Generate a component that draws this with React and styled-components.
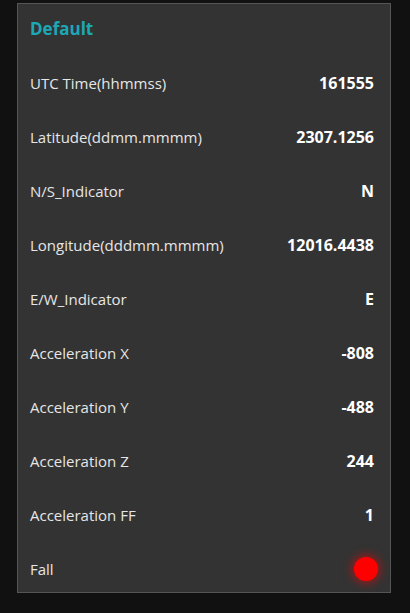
import React from 'react';
import styled, { createGlobalStyle } from 'styled-components';

const GlobalStyle = createGlobalStyle`
    html, body {
        margin: 0;
        padding: 0;
        background-color: #111111;
    }
    body {
        font-family: "Open Sans", "Noto Sans", sans-serif;
    }
`;

const Page = styled.div`
    width: 410px;
    height: 613px;
    padding: 3px 0 0 17px;
    box-sizing: border-box;
`;

const Panel = styled.section`
    width: 374px;
    height: 590px;
    box-sizing: border-box;
    background-color: #333333;
    border: 1px solid #555555;
    display: flex;
    flex-direction: column;
`;

const Title = styled.h2`
    margin: 0;
    padding: 13px 12px 0 12px;
    height: 48px;
    box-sizing: border-box;
    line-height: 24px;
    font-size: 17px;
    font-weight: 700;
    color: #1ca9b5;
`;

const List = styled.div`
    display: flex;
    flex-direction: column;
    gap: 8px;
    margin-top: 8px;
`;

const Row = styled.div`
    height: 46px;
    display: flex;
    align-items: center;
    justify-content: space-between;
    padding: 0 16px 0 12px;
`;

const Label = styled.span`
    font-size: 15px;
    color: #e6e6e6;
`;

const Value = styled.span`
    font-size: 16px;
    font-weight: 700;
    color: #ffffff;
`;

const Led = styled.span`
    width: 24px;
    height: 24px;
    border-radius: 50%;
    margin-right: -4px;
    background: ${(p) => (p.$on ? '#ff0000' : '#550000')};
    box-shadow: ${(p) => (p.$on ? '0 0 10px 2px rgba(255, 0, 0, 0.55)' : 'none')};
`;

const rows = [
    ['UTC Time(hhmmss)', '161555'],
    ['Latitude(ddmm.mmmm)', '2307.1256'],
    ['N/S_Indicator', 'N'],
    ['Longitude(dddmm.mmmm)', '12016.4438'],
    ['E/W_Indicator', 'E'],
    ['Acceleration X', '-808'],
    ['Acceleration Y', '-488'],
    ['Acceleration Z', '244'],
    ['Acceleration FF', '1'],
];

function App() {
    return (
        <Page>
            <GlobalStyle />
            <Panel>
                <Title>Default</Title>
                <List>
                    {rows.map(([label, value]) => (
                        <Row key={label}>
                            <Label>{label}</Label>
                            <Value>{value}</Value>
                        </Row>
                    ))}
                    <Row>
                        <Label>Fall</Label>
                        <Led $on />
                    </Row>
                </List>
            </Panel>
        </Page>
    );
}

export default App;
